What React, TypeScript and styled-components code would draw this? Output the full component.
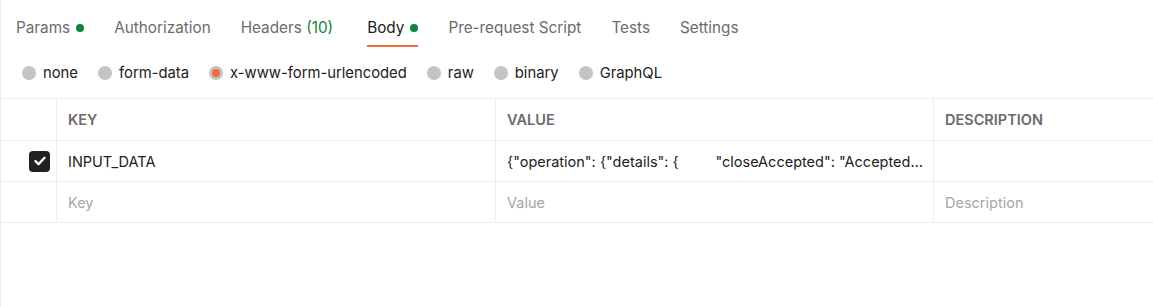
import styled, { createGlobalStyle } from 'styled-components';

const GlobalStyle = createGlobalStyle`
  html, body {
    margin: 0;
    padding: 0;
    background: #fff;
  }
  body {
    font-family: Inter, "Noto Sans", sans-serif;
    color: #212121;
  }
`;

const Page = styled.div`
  width: 1153px;
  height: 307px;
  border-left: 1px solid #ededed;
  box-sizing: border-box;
  overflow: hidden;
`;

const Tabs = styled.div`
  display: flex;
  align-items: flex-start;
  gap: 30px;
  padding-left: 15px;
  height: 47px;
`;

const Tab = styled.div<{ $active?: boolean; $wide?: boolean }>`
  display: flex;
  align-items: center;
  gap: 6px;
  height: 47px;
  padding-top: 10px;
  margin-right: ${({ $wide }) => ($wide ? '4px' : '0')};
  box-sizing: border-box;
  font-size: 15.3px;
  color: ${({ $active }) => ($active ? '#212121' : '#6b6b6b')};
  border-bottom: 2px solid ${({ $active }) => ($active ? '#f26b3a' : 'transparent')};
`;

const Dot = styled.span`
  width: 8px;
  height: 8px;
  border-radius: 50%;
  background: #0a843b;
`;

const Count = styled.span`
  color: #0a843b;
`;

const Radios = styled.div`
  display: flex;
  align-items: center;
  gap: 20px;
  padding-left: 21px;
  height: 51px;
`;

const RadioItem = styled.label`
  display: flex;
  align-items: center;
  gap: 7px;
  font-size: 14.8px;
  color: #212121;
`;

const Radio = styled.span<{ $checked?: boolean }>`
  width: 14px;
  height: 14px;
  border-radius: 50%;
  background: #c4c4c4;
  display: flex;
  align-items: center;
  justify-content: center;
  &::after {
    content: '';
    width: 8px;
    height: 8px;
    border-radius: 50%;
    background: ${({ $checked }) => ($checked ? '#f26b3a' : 'transparent')};
  }
`;

const Table = styled.div`
  display: grid;
  grid-template-columns: 56px 439px 438px 1fr;
  grid-template-rows: 42px 41px 41px;
  border-top: 1px solid #ededed;
`;

const Cell = styled.div<{ $head?: boolean; $muted?: boolean; $last?: boolean }>`
  box-sizing: border-box;
  display: flex;
  align-items: center;
  padding: 0 11px;
  border-bottom: 1px solid #ededed;
  border-right: ${({ $last }) => ($last ? 'none' : '1px solid #ededed')};
  font-size: 14.5px;
  font-weight: ${({ $head }) => ($head ? 600 : 400)};
  color: ${({ $head, $muted }) => ($head ? '#6b6b6b' : $muted ? '#a6a6a6' : '#212121')};
  white-space: pre;
  overflow: hidden;
  min-width: 0;
`;

const CheckCell = styled(Cell)`
  justify-content: flex-end;
  padding: 0 6px 0 0;
`;

const ValueCell = styled(Cell)`
  padding: 0 6px 0 11px;
`;

const Ellipsis = styled.span`
  overflow: hidden;
  text-overflow: ellipsis;
  white-space: pre;
`;

const Checkbox = styled.span`
  width: 21px;
  height: 21px;
  border-radius: 4px;
  background: #212121;
  display: flex;
  align-items: center;
  justify-content: center;
`;

const radios = ['none', 'form-data', 'x-www-form-urlencoded', 'raw', 'binary', 'GraphQL'];

export default function App() {
  return (
    <>
      <GlobalStyle />
      <Page>
        <Tabs>
          <Tab>
            Params <Dot />
          </Tab>
          <Tab>Authorization</Tab>
          <Tab $wide>
            <span>
              Headers <Count>(10)</Count>
            </span>
          </Tab>
          <Tab $active>
            Body <Dot />
          </Tab>
          <Tab>Pre-request Script</Tab>
          <Tab>Tests</Tab>
          <Tab>Settings</Tab>
        </Tabs>
        <Radios>
          {radios.map((r) => (
            <RadioItem key={r}>
              <Radio $checked={r === 'x-www-form-urlencoded'} />
              {r}
            </RadioItem>
          ))}
        </Radios>
        <Table>
          <Cell />
          <Cell $head>KEY</Cell>
          <Cell $head>VALUE</Cell>
          <Cell $head $last>DESCRIPTION</Cell>

          <CheckCell>
            <Checkbox>
              <svg width="14" height="14" viewBox="0 0 14 14">
                <path d="M2.5 7.2l3 3 6-6.4" fill="none" stroke="#fff" strokeWidth="2.4" strokeLinecap="round" strokeLinejoin="round" />
              </svg>
            </Checkbox>
          </CheckCell>
          <Cell>INPUT_DATA</Cell>
          <ValueCell>
            <Ellipsis>{'{"operation": {"details": {         "closeAccepted": "Accepted by the requester", "closeComment": "Closed"}}}'}</Ellipsis>
          </ValueCell>
          <Cell $last />

          <Cell />
          <Cell $muted>Key</Cell>
          <Cell $muted>Value</Cell>
          <Cell $muted $last>Description</Cell>
        </Table>
      </Page>
    </>
  );
}
